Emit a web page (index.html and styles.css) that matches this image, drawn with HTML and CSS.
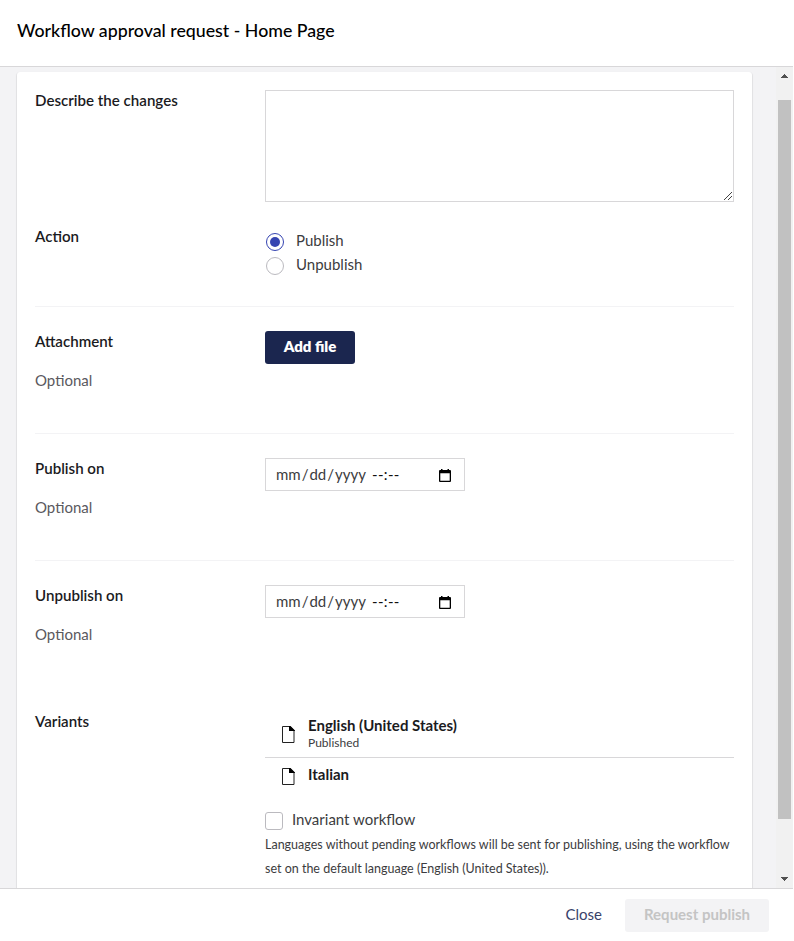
FILE: index.html
```html
<!DOCTYPE html>
<html lang="en">
<head>
<meta charset="utf-8">
<title>Workflow approval request</title>
<link rel="stylesheet" href="styles.css">
</head>
<body>
<div class="editor">
  <header class="header"><h1>Workflow approval request - Home Page</h1></header>
  <main class="body">
    <div class="card">
      <section class="row row-describe">
        <div class="label">Describe the changes</div>
        <div class="control"><div class="textarea"><svg class="grip" width="10" height="10" viewBox="0 0 10 10" shape-rendering="crispEdges"><path d="M1 9L9 1M5 9L9 5" stroke="#444" fill="none"/></svg></div></div>
      </section>
      <section class="row row-action">
        <div class="label">Action</div>
        <div class="control radios">
          <div class="radio"><span class="dot checked"></span><span>Publish</span></div>
          <div class="radio"><span class="dot"></span><span>Unpublish</span></div>
        </div>
      </section>
      <section class="row lined">
        <div class="label">Attachment<small>Optional</small></div>
        <div class="control"><button class="btn primary">Add file</button></div>
      </section>
      <section class="row lined">
        <div class="label">Publish on<small>Optional</small></div>
        <div class="control"><div class="date"><span class="mask">mm<i>/</i>dd<i>/</i>yyyy</span><span class="time">--:--</span><svg width="12" height="13" viewBox="0 0 12 13"><path d="M2 0h1.500v1h5V0H10v1h1q1 0 1 1v10q0 1-1 1H1q-1 0-1-1V2q0-1 1-1h1zM1.300 4.200v7.500h9.400V4.200z" fill="#000" fill-rule="evenodd"/></svg></div></div>
      </section>
      <section class="row lined">
        <div class="label">Unpublish on<small>Optional</small></div>
        <div class="control"><div class="date"><span class="mask">mm<i>/</i>dd<i>/</i>yyyy</span><span class="time">--:--</span><svg width="12" height="13" viewBox="0 0 12 13"><path d="M2 0h1.500v1h5V0H10v1h1q1 0 1 1v10q0 1-1 1H1q-1 0-1-1V2q0-1 1-1h1zM1.300 4.200v7.500h9.400V4.200z" fill="#000" fill-rule="evenodd"/></svg></div></div>
      </section>
      <section class="row row-variants">
        <div class="label">Variants</div>
        <div class="control">
          <div class="variant first">
            <svg width="13" height="17" viewBox="0 0 13 17"><path d="M.5.500h7.500l4 4v12H.500z" fill="none" stroke="#222"/><path d="M7 0h1.500L13 4.500V5H7z" fill="#000"/></svg>
            <div class="variant-text"><b>English (United States)</b><span>Published</span></div>
          </div>
          <div class="variant">
            <svg width="13" height="17" viewBox="0 0 13 17"><path d="M.5.500h7.500l4 4v12H.500z" fill="none" stroke="#222"/><path d="M7 0h1.500L13 4.500V5H7z" fill="#000"/></svg>
            <div class="variant-text"><b>Italian</b></div>
          </div>
          <div class="check"><span class="box"></span><span>Invariant workflow</span></div>
          <p class="help">Languages without pending workflows will be sent for publishing, using the workflow set on the default language (English (United States)).</p>
        </div>
      </section>
    </div>
    <div class="scrollbar">
      <svg width="7" height="4" viewBox="0 0 7 4" shape-rendering="crispEdges"><path d="M3 0h1v1h1v1h1v1h1v1H0V3h1V2h1V1h1z" fill="#505050"/></svg>
      <div class="thumb"></div>
      <svg class="down" width="7" height="4" viewBox="0 0 7 4" shape-rendering="crispEdges"><path d="M0 0h7v1H6v1H5v1H4v1H3V3H2V2H1V1H0z" fill="#505050"/></svg>
    </div>
  </main>
  <footer class="footer"><button class="btn link">Close</button><button class="btn disabled">Request publish</button></footer>
</div>
</body>
</html>
```
FILE: styles.css
```css
* { box-sizing: border-box; }
body { margin: 0; background: #fff; color: #3c3c40; font: 15px/20px Lato, "Liberation Sans", sans-serif; overflow: hidden; }
.editor { width: 793px; height: 941px; display: flex; flex-direction: column; }
.header { height: 67px; flex: none; border-bottom: 1px solid #d8d7d9; padding: 19px 17px; }
h1 { margin: 0; font-size: 17.75px; line-height: 22px; font-weight: 500; color: #000; }
.body { height: 821px; flex: none; display: flex; justify-content: space-between; background: #f3f3f5; overflow: hidden; padding-left: 17px; }
.card { width: 735px; height: 850px; margin-top: 5px; padding: 18px; background: #fff; border-radius: 3px; box-shadow: 0 1px 1px 0 rgba(0,0,0,.16), 0 1px 1px 1px rgba(0,0,0,.06); }
.row { display: flex; }
.label { width: 230px; flex: none; font-size: 15.1px; font-weight: 600; color: #1b1b1e; }
.label small { display: block; margin-top: 19px; font-size: 15px; font-weight: 400; color: #5a595e; }
.control { flex: 1; min-width: 0; }
.row-describe { height: 136px; }
.textarea { height: 112px; border: 1px solid #d8d7d9; display: flex; justify-content: flex-end; align-items: flex-end; }
.grip { display: block; }
.row-action { height: 80px; }
.radios { padding-top: 4px; }
.radio { display: flex; height: 24px; gap: 12px; padding-left: 1px; }
.dot { width: 18px; height: 18px; margin-top: 3px; border: 1px solid #bbbabf; border-radius: 50%; display: grid; place-items: center; }
.dot.checked { border-color: #3544b1; }
.dot.checked::after { content: ""; width: 10px; height: 10px; border-radius: 50%; background: #3544b1; }
.lined { height: 127px; border-top: 1px solid #f3f3f5; padding-top: 24px; }
.btn { border: 0; border-radius: 3px; font: 700 15px/20px Lato, sans-serif; padding: 0 0 3px; height: 33px; display: block; }
.primary { width: 90px; background: #1b264f; color: #fff; font-weight: 800; }
.date { width: 200px; height: 33px; border: 1px solid #d8d7d9; display: flex; align-items: center; padding: 0 13px 0 10px; }
.date i { font-style: normal; padding: 0 1px; }
.date svg { margin-top: 1px; }
.mask, .time { padding-bottom: 2px; }
.mask { width: 96px; }
.time { flex: 1; color: #111; letter-spacing: .35px; }
.row-variants { padding-top: 24px; }
.variant { height: 37px; display: flex; padding: 8px 17px 0; gap: 13px; }
.variant svg { margin-top: 2px; }
.variant.first { height: 47px; border-bottom: 1px solid #d8d7d9; padding-top: 5px; }
.variant.first svg { margin-top: 10px; }
.variant-text { line-height: 18px; color: #1b1b1e; }
.variant:not(.first) .variant-text { line-height: 16px; }
.variant-text b { font-weight: 700; display: block; }
.variant-text span { font-size: 12px; line-height: 14px; margin-top: 2px; display: block; color: #3c3c40; }
.check { display: flex; gap: 9px; margin-top: 14px; }
.box { width: 18px; height: 18px; margin-top: 3px; border: 1px solid #bbbabf; border-radius: 3px; }
.help { margin: 3px 0 0; font-size: 12.5px; line-height: 24px; }
.scrollbar { width: 17px; height: 821px; background: #f1f1f1; display: flex; flex-direction: column; align-items: center; padding: 7px 0; }
.thumb { width: 13px; height: 719px; margin-top: 22px; background: #c1c1c1; }
.down { margin-top: auto; }
.footer { height: 53px; border-top: 1px solid #d8d7d9; padding: 10px 24px 0 0; display: flex; justify-content: flex-end; gap: 23px; }
.link { background: none; font-weight: 400; color: #39426a; }
.disabled { width: 144px; background: #f3f3f5; color: #c4c4c4; }
```
